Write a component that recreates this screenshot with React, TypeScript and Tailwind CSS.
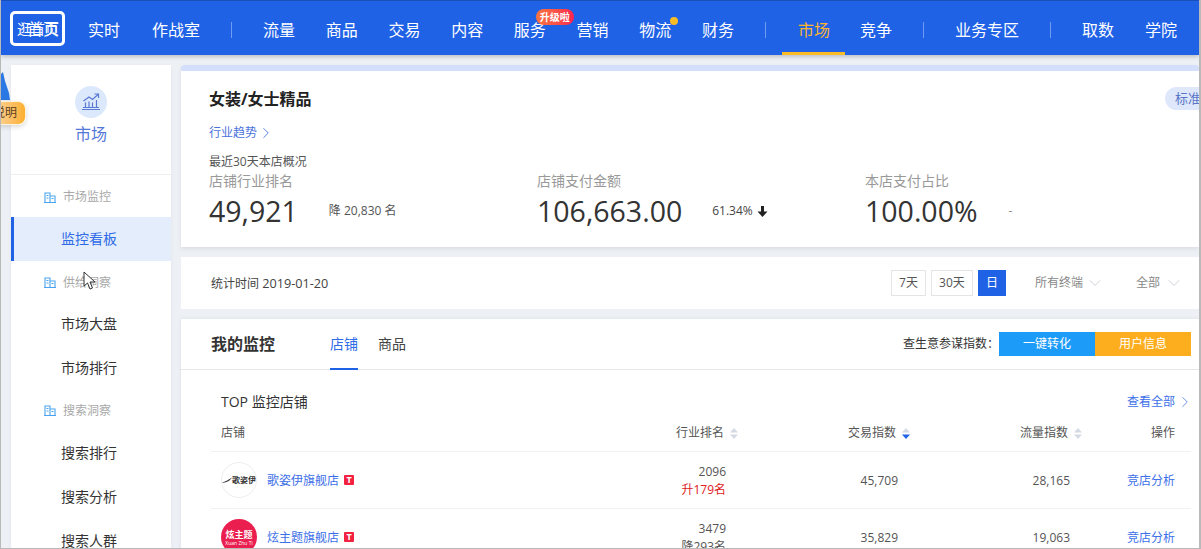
import React from "react";
import { ChevronRight, ChevronDown } from "lucide-react";

const Divider = ({ className = "" }: { className?: string }) => (
  <span className={"w-px h-4 bg-[#6f9bf0] shrink-0 " + className} />
);

const GroupIcon = () => (
  <svg width="12" height="11" viewBox="0 0 12 11" className="shrink-0" fill="none" stroke="#4aa3ee" strokeWidth="1.1">
    <path d="M1 10.500V1h5v9.500M6 4h5v6.500M0 10.500h12" />
    <path d="M2.500 3.500h2M2.500 6h2M7.500 6.500h2" />
  </svg>
);

const SideGroup = ({ label, className = "h-[41px]" }: { label: string; className?: string }) => (
  <div className={"flex items-center pl-[33px] gap-[7px] text-xs text-[#a9a9a9] shrink-0 " + className}>
    <GroupIcon />
    <span>{label}</span>
  </div>
);

const SideItem = ({ label, active }: { label: string; active?: boolean }) => (
  <div
    className={
      "h-[44px] flex items-center text-sm shrink-0 " +
      (active
        ? "bg-[#e3edfb] text-[#2f6be6] border-l-[3px] border-[#2062e6] pl-[47px]"
        : "text-[#333333] pl-[50px]")
    }
  >
    {label}
  </div>
);

const Sort = ({ active }: { active?: boolean }) => (
  <svg width="8" height="11" viewBox="0 0 8 11" className="ml-[6px] shrink-0">
    <path d="M4 0L8 4.500H0z" fill="#d5dae3" />
    <path d="M4 11L0 6.500H8z" fill={active ? "#2062e6" : "#d5dae3"} />
  </svg>
);

const Stat = ({ label, value, note, width }: { label: string; value: string; note: React.ReactNode; width: string }) => (
  <div className={width + " shrink-0"}>
    <div className="h-5 leading-5 text-[14px] text-[#999999] whitespace-nowrap">{label}</div>
    <div className="flex items-center h-[38px] mt-px">
      <span className="text-[28.500px] text-[#333333] leading-none">{value}</span>
      {note}
    </div>
  </div>
);

const Row = ({
  logo,
  name,
  rank,
  change,
  changeClass,
  trade,
  flow,
}: {
  logo: React.ReactNode;
  name: string;
  rank: string;
  change: string;
  changeClass: string;
  trade: string;
  flow: string;
}) => (
  <div className="h-[57px] border-b border-[#f0f1f4] grid grid-cols-[345px_172px_172px_172px_93px] items-center pl-[10px] text-xs text-[#555555] shrink-0">
    <div className="flex items-center">
      {logo}
      <span className="ml-[10px] mt-[2px] text-[#3d6fe8]">{name}</span>
      <span className="ml-[5px] w-[10px] h-[10px] rounded-[1px] bg-[#f1213f] text-white text-[9px] font-bold leading-[10px] text-center">T</span>
    </div>
    <div className="text-right pr-3 leading-[18px] mt-[2px]">
      <div>{rank}</div>
      <div className={changeClass}>{change}</div>
    </div>
    <div className="text-right pr-3 mt-[2px]">{trade}</div>
    <div className="text-right pr-3 mt-[2px]">{flow}</div>
    <div className="text-right text-[#3d6fe8] mt-[2px]">竞店分析</div>
  </div>
);

export default function App() {
  return (
    <div
      className="relative w-[1201px] h-[549px] overflow-hidden bg-[#edf0f5] border-l border-r-2 border-b border-[#b9b9b9] text-[#333333]"
      style={{ fontFamily: '"Open Sans","Noto Sans CJK SC",sans-serif' }}
    >
      <header className="relative z-10 h-[55px] bg-[#2062e6] border-t border-[#1a4fb8] flex items-center text-white text-base shadow-[0_2px_4px_rgba(0,0,0,0.2)]">
        <div className="relative ml-[9px] w-[55px] h-[35px] shrink-0 border-[3px] border-white rounded-[5px] text-center">
          <span className="absolute left-[4px] top-[5px] text-[14px] leading-[20px] whitespace-nowrap">逛首页</span>
          <span className="absolute left-[14px] top-[4px] text-base leading-[22px] whitespace-nowrap">首页</span>
        </div>
        <nav className="flex items-center h-full pt-[3px] ml-[23px] whitespace-nowrap">
          <div className="flex gap-8">
            <span>实时</span>
            <span>作战室</span>
          </div>
          <Divider className="mx-[31px]" />
          <div className="flex gap-[30.700px]">
            <span>流量</span>
            <span>商品</span>
            <span>交易</span>
            <span>内容</span>
            <span className="relative">
              服务
              <span className="absolute left-[22px] top-[-9px] w-[38px] h-4 rounded-full bg-gradient-to-r from-[#f9743c] to-[#fb1f4e] text-[10px] font-bold leading-4 text-center">升级啦</span>
            </span>
            <span>营销</span>
            <span className="relative">
              物流
              <span className="absolute left-[31px] top-[-1px] w-2 h-2 rounded-full bg-[#fbbb25]" />
            </span>
            <span>财务</span>
          </div>
          <Divider className="ml-[31px] mr-[32px]" />
          <div className="flex gap-[30px] h-full items-center">
            <span className="relative h-full flex items-center text-[#fbb52e]">
              市场
              <span className="absolute left-[-16px] right-[-15px] bottom-0 h-[3px] bg-[#fbbb25]" />
            </span>
            <span>竞争</span>
          </div>
          <Divider className="mx-[31px]" />
          <span>业务专区</span>
          <Divider className="mx-[31px]" />
          <div className="flex gap-[31px]">
            <span>取数</span>
            <span>学院</span>
          </div>
        </nav>
      </header>

      <main className="flex pt-[10px] pl-[10px] gap-[10px]">
        <aside className="w-[160px] h-[500px] shrink-0 bg-white flex flex-col overflow-hidden shadow-[0_1px_4px_rgba(0,0,0,0.05)]">
          <div className="h-[110px] border-b border-[#eeeeee] flex flex-col items-center pt-[21px] shrink-0">
            <div className="w-8 h-8 rounded-full bg-[#dce8fb] flex items-center justify-center">
              <svg width="20" height="18" viewBox="0 0 20 18" fill="none" stroke="#5b79d6" strokeWidth="1.200">
                <path d="M1 16.500h18M2 14.500h16M4.500 14V9.500M8 14V8.500M11.500 14V9.500M15.500 14V7" />
                <path d="M2.500 8L8 4l3.500 2.500L17 1.500M13.500 1H17.500V5" />
              </svg>
            </div>
            <span className="mt-1 text-base leading-6 text-[#5478d8]">市场</span>
          </div>
          <SideGroup label="市场监控" className="h-[42px] pt-[2px]" />
          <SideItem label="监控看板" active />
          <SideGroup label="供给洞察" className="h-[41px] pt-[2px]" />
          <SideItem label="市场大盘" />
          <SideItem label="市场排行" />
          <SideGroup label="搜索洞察" />
          <SideItem label="搜索排行" />
          <SideItem label="搜索分析" />
          <SideItem label="搜索人群" />
        </aside>

        <section className="flex-1 min-w-0 flex flex-col gap-[10px]">
          <div className="relative h-[182px] bg-white rounded-t-[4px] border-t-[6px] border-[#d4dffb] pl-7 pt-[17px] shadow-[0_2px_4px_rgba(0,0,0,0.08)] shrink-0">
            <h1 className="text-base font-bold leading-[22px] text-[#222222]">女装/女士精品</h1>
            <div className="mt-[14px] h-[18px] flex items-center text-xs text-[#4a72dc]">
              行业趋势
              <ChevronRight className="w-[18px] h-[18px] text-[#5a7fe0]" strokeWidth={1.300} />
            </div>
            <div className="mt-[11px] h-[18px] leading-[18px] text-xs text-[#555555]">最近30天本店概况</div>
            <div className="flex">
              <Stat
                width="w-[328px]"
                label="店铺行业排名"
                value="49,921"
                note={<span className="ml-[31px] text-xs text-[#555555]">降 20,830 名</span>}
              />
              <Stat
                width="w-[328px]"
                label="店铺支付金额"
                value="106,663.00"
                note={
                  <span className="ml-[30px] flex items-center text-xs text-[#444444]">
                    61.34%
                    <svg width="11" height="11" viewBox="0 0 11 11" className="ml-1">
                      <path d="M4 0h3v5.500h3.500L5.500 11 .5 5.500H4z" fill="#222222" />
                    </svg>
                  </span>
                }
              />
              <Stat
                width="w-[250px]"
                label="本店支付占比"
                value="100.00%"
                note={<span className="ml-[31px] text-xs text-[#888888]">-</span>}
              />
            </div>
            <div className="absolute right-[-20px] top-[16px] w-[54px] h-[23px] rounded-full bg-[#dfe8fb] pl-[10px] text-[13px] leading-[23px] text-[#5a75c8] whitespace-nowrap">标准</div>
          </div>

          <div className="h-[52px] bg-white flex items-center pl-[30px] pr-[15px] text-xs shrink-0">
            <span className="text-[#444444]">
              统计时间 <span className="text-[12.700px]">2019-01-20</span>
            </span>
            <div className="ml-auto flex items-center">
              <span className="w-[35px] h-[26px] border border-[#e5e5e5] flex items-center justify-center text-[#555555]">7天</span>
              <span className="ml-[5px] w-[42px] h-[26px] border border-[#e5e5e5] flex items-center justify-center text-[#555555]">30天</span>
              <span className="ml-[5px] w-[28px] h-[26px] bg-[#2062e6] text-white flex items-center justify-center">日</span>
              <span className="ml-[29px] text-[#888888]">所有终端</span>
              <ChevronDown className="ml-[2px] w-5 h-5 text-[#cfd3da]" strokeWidth={1.200} />
              <span className="ml-[31px] text-[#888888]">全部</span>
              <ChevronDown className="ml-1 w-5 h-5 text-[#cfd3da]" strokeWidth={1.200} />
            </div>
          </div>

          <div className="flex-1 bg-white shadow-[0_0_4px_rgba(0,0,0,0.08)] flex flex-col min-h-0">
            <div className="h-[51px] border-b border-[#e5e7ea] flex items-center pl-[30px] pr-2 shrink-0">
              <h2 className="text-base font-bold text-[#333333] w-[119px]">我的监控</h2>
              <div className="relative h-full flex items-center text-sm text-[#2f6be6] w-[28px] whitespace-nowrap">
                店铺
                <span className="absolute left-0 right-0 bottom-[-1px] h-[2px] bg-[#2062e6]" />
              </div>
              <span className="ml-[20px] text-sm text-[#444444]">商品</span>
              <span className="ml-auto text-xs text-[#333333]">查生意参谋指数：</span>
              <span className="w-[96px] h-6 bg-[#1d9bf8] text-white text-xs leading-6 text-center">一键转化</span>
              <span className="w-[96px] h-6 bg-[#fdae1e] text-white text-xs leading-6 text-center">用户信息</span>
            </div>
            <div className="pl-[30px] pr-2 flex flex-col">
              <div className="flex items-center pl-[10px] h-[22px] mt-[21px] shrink-0">
                <span className="text-sm text-[#333333]">TOP 监控店铺</span>
                <span className="ml-auto mr-[16px] text-xs text-[#3d6fe8]">查看全部</span>
                <ChevronRight className="ml-[-15px] mr-[-3px] w-[18px] h-[18px] text-[#6f8fe8]" strokeWidth={1.300} />
              </div>
              <div className="h-[40px] border-b border-[#f0f1f4] grid grid-cols-[345px_172px_172px_172px_93px] items-center pl-[10px] pt-[3px] text-xs text-[#555555] shrink-0 mt-[-1px]">
                <span>店铺</span>
                <span className="flex items-center justify-end">行业排名<Sort /></span>
                <span className="flex items-center justify-end">交易指数<Sort active /></span>
                <span className="flex items-center justify-end">流量指数<Sort /></span>
                <span className="text-right">操作</span>
              </div>
              <Row
                logo={
                  <span className="w-9 h-9 rounded-full border border-[#eeeeee] flex items-center justify-center shrink-0 overflow-hidden">
                    <svg width="10" height="6" viewBox="0 0 10 6" className="shrink-0"><path d="M0 5.500C3 5 6 3 10 .5 8 4 3 6.500 0 5.500z" fill="#333" /></svg>
                    <span className="text-[8px] font-bold text-[#333333] whitespace-nowrap">歌姿伊</span>
                  </span>
                }
                name="歌姿伊旗舰店"
                rank="2096"
                change="升179名"
                changeClass="text-[#e0201c]"
                trade="45,709"
                flow="28,165"
              />
              <Row
                logo={
                  <span className="w-9 h-9 rounded-full bg-[#ea1f50] flex flex-col items-center justify-center shrink-0 text-white overflow-hidden">
                    <span className="text-[9px] font-bold leading-[11px] whitespace-nowrap">炫主题</span>
                    <span className="text-[5px] leading-[6px] whitespace-nowrap">Xuan Zhu Ti</span>
                  </span>
                }
                name="炫主题旗舰店"
                rank="3479"
                change="降293名"
                changeClass="text-[#555555]"
                trade="35,829"
                flow="19,063"
              />
            </div>
          </div>
        </section>
      </main>

      {/* floating help badge, clipped by the page's left edge */}
      <svg width="9" height="30" viewBox="0 0 9 30" className="absolute left-0 top-[71px]">
        <path d="M0 3L2 1 4 10 8 22 9 29H0z" fill="#2a78e4" />
      </svg>
      <div className="absolute left-[-13px] top-[101px] w-[38px] h-6 rounded-r-[8px] bg-gradient-to-r from-[#fbd9a6] to-[#fdb02a] border border-[#fff3dc] text-xs leading-[22px] text-right pr-[8px] text-[#5a4020] shadow-[0_2px_5px_rgba(0,0,0,0.15)] whitespace-nowrap">说明</div>

      {/* mouse pointer */}
      <svg width="14" height="20" viewBox="0 0 14 20" className="absolute left-[82px] top-[271px]">
        <path d="M1 1v14l3.500-3 2.500 6 2.500-1-2.500-6H12z" fill="#ffffff" stroke="#333333" strokeWidth="1" />
      </svg>
    </div>
  );
}
